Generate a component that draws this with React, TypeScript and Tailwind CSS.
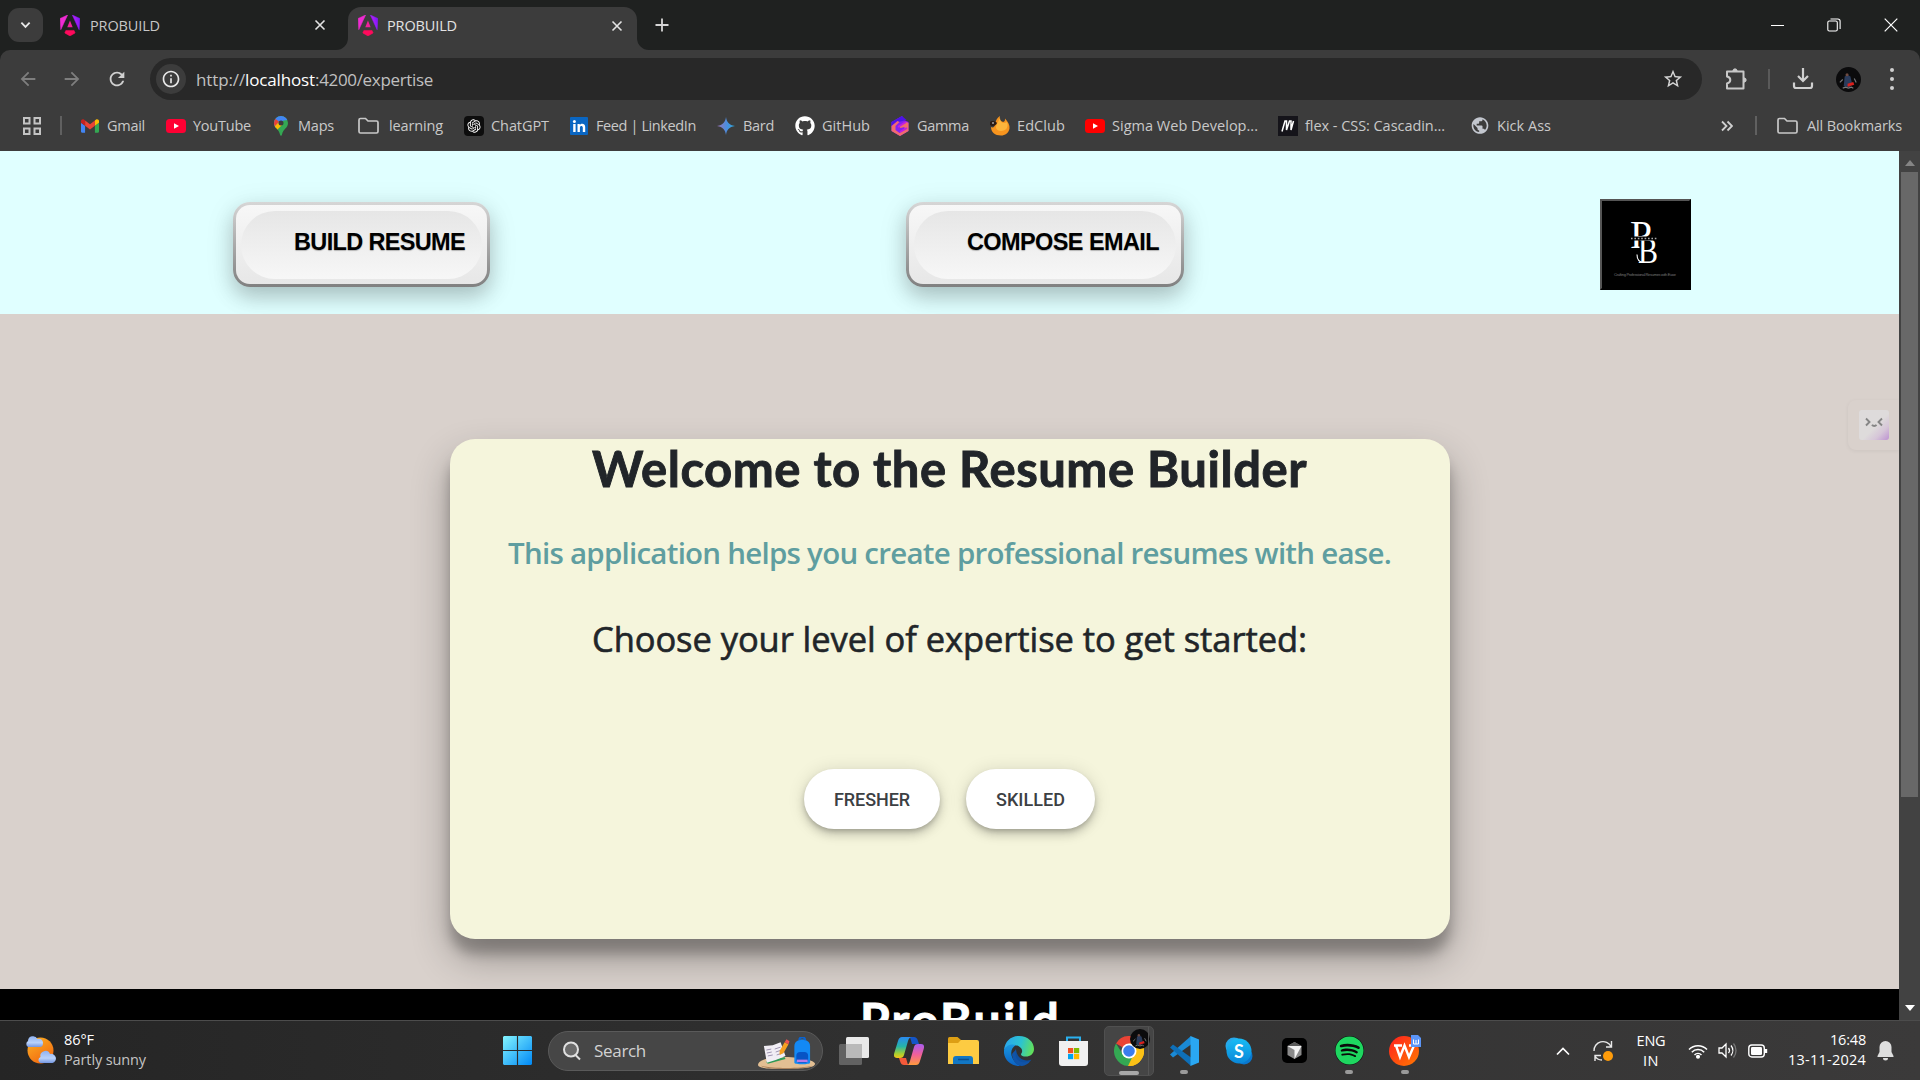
import React, { useLayoutEffect, useRef } from "react";
import { FaGithub, FaSpotify } from "react-icons/fa";
import { RiOpenaiFill } from "react-icons/ri";
import { MdArrowBack, MdArrowForward, MdRefresh, MdStarBorder, MdPublic, MdInfoOutline } from "react-icons/md";

/** Text spread over a given width by letter spacing. */
function Fit({ w, children, className = "" }: { w: number; children: string; className?: string }) {
  const ref = useRef<HTMLSpanElement>(null);
  useLayoutEffect(() => {
    const el = ref.current;
    if (!el) return;
    el.style.letterSpacing = "0px";
    const natural = el.getBoundingClientRect().width;
    el.style.letterSpacing = `${(w - natural) / children.length}px`;
  }, [w, children]);
  return (
    <span ref={ref} className={`inline-block whitespace-pre shrink-0 ${className}`}>
      {children}
    </span>
  );
}

function Angular({ id }: { id: string }) {
  return (
    <svg viewBox="0 0 223 236" className="w-5 h-[21px]">
      <defs>
        <linearGradient id={id + "a"} x1="0" y1=".7" x2="1" y2=".3">
          <stop offset="0" stopColor="#e91fd0" />
          <stop offset=".5" stopColor="#a51ff5" />
          <stop offset="1" stopColor="#7a14ff" />
        </linearGradient>
      </defs>
      <path fill={`url(#${id}a)`} stroke="#8a1cff" strokeWidth="6" d="m222.077 39.192-8.019 125.923L137.387 0l84.69 39.192Z" />
      <path fill="#ff0a5c" stroke="#ff0a5c" strokeWidth="6" d="m168.972 202.017-57.933 33.056-57.934-33.056 11.783-28.556h92.301l11.783 28.556Z" />
      <path fill="#f0209a" d="M111.039 62.675l30.357 73.803H80.681l30.358-73.803Z" />
      <path fill="#f02bd2" stroke="#f02bd2" strokeWidth="6" d="M7.937 165.115 0 39.192 84.69 0 7.937 165.115Z" />
    </svg>
  );
}

function Close() {
  return (
    <svg viewBox="0 0 12 12" className="w-3 h-3">
      <path d="M1.500 1.500l9 9M10.500 1.500l-9 9" stroke="#e3e3e3" strokeWidth="1.600" />
    </svg>
  );
}

function TabStrip() {
  return (
    <div className="h-[50px] bg-[#1f2120] flex items-center">
      <div className="ml-2 w-[35px] h-[34px] rounded-[11px] bg-[#3c3c3c] flex items-center justify-center">
        <svg viewBox="0 0 12 8" className="w-[11px] h-2">
          <path d="M1.500 1.500L6 6l4.500-4.500" fill="none" stroke="#e8e8e8" strokeWidth="2" />
        </svg>
      </div>
      <div className="w-[305px] flex items-center pl-[17px] pr-[22px]">
        <Angular id="t1" />
        <Fit w={70} className="ml-2.5 mt-px text-[14.5px] text-[#c7c7c7]">PROBUILD</Fit>
        <div className="ml-auto"><Close /></div>
      </div>
      <div className="relative w-[289px] h-[43px] mt-[7px] rounded-t-[13px] bg-[#3c3c3c] flex items-center pl-2.5 pr-[14px] pb-1.5">
        <svg viewBox="0 0 12 12" className="absolute -left-3 bottom-0 w-3 h-3"><path d="M12 0v12H0A12 12 0 0 0 12 0z" fill="#3c3c3c" /></svg>
        <svg viewBox="0 0 12 12" className="absolute -right-3 bottom-0 w-3 h-3"><path d="M0 0v12h12A12 12 0 0 1 0 0z" fill="#3c3c3c" /></svg>
        <Angular id="t2" />
        <Fit w={70} className="ml-[9px] text-[14.5px] text-[#e3e3e3]">PROBUILD</Fit>
        <div className="ml-auto"><Close /></div>
      </div>
      <svg viewBox="0 0 14 14" className="ml-[18px] w-[14px] h-[14px]"><path d="M7 .5v13M.5 7h13" stroke="#d5d5d5" strokeWidth="1.8" /></svg>
      <div className="ml-auto flex items-center gap-[43px] pr-[22px]">
        <div className="w-[13px] h-px bg-white" />
        <svg viewBox="0 0 14 14" className="w-[14px] h-[14px]" fill="none" stroke="#fff" strokeWidth="1.1">
          <rect x=".8" y="3" width="9.500" height="10" rx="1.500" />
          <path d="M3.500 1h7.300a2.300 2.300 0 0 1 2.300 2.300V11" />
        </svg>
        <svg viewBox="0 0 14 14" className="w-[14px] h-[14px]"><path d="M.7.7l12.600 12.600M13.300.7L.7 13.300" stroke="#fff" strokeWidth="1.200" /></svg>
      </div>
    </div>
  );
}

function AddressBar() {
  return (
    <div className="h-[58px] pt-2 flex">
      <div className="flex items-center h-[42px] pl-[17px] text-[22px]">
        <MdArrowBack className="text-[#7e7e7e]" />
        <MdArrowForward className="ml-[22px] text-[#7e7e7e]" />
        <MdRefresh className="ml-[23px] text-[#d0d0d0]" />
      </div>
      <div className="ml-[22px] w-[1552px] h-[42px] rounded-full bg-[#282828] flex items-center pl-1.5 pr-[18px]">
        <div className="w-[30px] h-[30px] rounded-full bg-[#3c3c3c] flex items-center justify-center">
          <MdInfoOutline className="text-[20px] text-[#e8e8e8]" />
        </div>
        <div className="ml-[10px] mt-0.5 flex text-[17px] text-[#c0c0c0]">
          <Fit w={49}>http://</Fit>
          <Fit w={70} className="text-white">localhost</Fit>
          <Fit w={118}>:4200/expertise</Fit>
        </div>
        <MdStarBorder className="ml-auto text-[22px] text-[#d5d5d5]" />
      </div>
      <div className="flex items-center h-[42px] ml-[23px]">
        <svg viewBox="0 0 22 24" className="w-[22px] h-6" fill="none" stroke="#c8c8c8" strokeWidth="2" strokeLinejoin="round">
          <path d="M2 4.500h16.500v17H2v-5c2.400-.6 3.300-2 3.300-3.500S4.400 10 2 9.500z" />
          <path d="M7.800 3.500a2.300 2.300 0 0 1 4.400 0zM19.500 10.800a2.300 2.300 0 0 1 0 4.400z" fill="#c8c8c8" strokeWidth="1" />
        </svg>
        <div className="ml-[21px] w-0.5 h-5 bg-[#5a5a5a]" />
        <svg viewBox="0 0 22 22" className="ml-[22px] w-[22px] h-[22px]" fill="none" stroke="#cfcfcf" strokeWidth="2.200">
          <path d="M11 0v12M6 8l5 5 5-5M2 14.500V18a2 2 0 0 0 2 2h14a2 2 0 0 0 2-2v-3.500" />
        </svg>
        <Avatar className="ml-[22px] w-[25px] h-[25px]" />
        <div className="ml-[29px] flex flex-col gap-[5px]">
          <i className="w-1 h-1 rounded-full bg-[#d0d0d0]" />
          <i className="w-1 h-1 rounded-full bg-[#d0d0d0]" />
          <i className="w-1 h-1 rounded-full bg-[#d0d0d0]" />
        </div>
      </div>
    </div>
  );
}

function Avatar({ className = "" }: { className?: string }) {
  return (
    <svg viewBox="0 0 26 26" className={className}>
      <circle cx="13" cy="13" r="13" fill="#0b0b0c" />
      <path d="M8 20l1-10 3-2 3 2 1.500 6-2 5z" fill="#2b3c5c" />
      <circle cx="11.500" cy="8" r="1.600" fill="#6d4a40" />
      <path d="M12 17.500l6-2 1 3-7 2z" fill="#d9201c" />
      <path d="M4 16l3-3M19 12l2 4M7 22l3-1 3 1 3-1 2 1" stroke="#77777a" strokeWidth="1.200" fill="none" />
    </svg>
  );
}

const YouTube = ({ c }: { c: string }) => (
  <svg viewBox="0 0 20 14" className="w-5 h-[14px]"><rect width="20" height="14" rx="3.500" fill={c} /><path d="M8 4.200v5.600L13 7z" fill="#fff" /></svg>
);
const Folder = () => (
  <svg viewBox="0 0 21 17" className="w-[21px] h-[17px] shrink-0"><path d="M1 3a1.500 1.500 0 0 1 1.500-1.500h5L10 4h8.500A1.500 1.500 0 0 1 20 5.500v9a1.500 1.500 0 0 1-1.500 1.500h-16A1.500 1.500 0 0 1 1 14.500z" fill="none" stroke="#c8c8c8" strokeWidth="1.700" /></svg>
);
const Gmail = () => (
  <svg viewBox="52 42 88 66" className="w-[18px] h-[14px]">
    <path fill="#4285f4" d="M58 108h14V74L52 59v43c0 3.320 2.690 6 6 6" />
    <path fill="#34a853" d="M120 108h14c3.320 0 6-2.690 6-6V59l-20 15" />
    <path fill="#fbbc04" d="M120 48v26l20-15v-8c0-7.420-8.470-11.650-14.400-7.200" />
    <path fill="#ea4335" d="M72 74V48l24 18 24-18v26L96 92" />
    <path fill="#c5221f" d="M52 51v8l20 15V48l-5.600-4.200c-5.940-4.450-14.400-.22-14.400 7.200" />
  </svg>
);
const Maps = () => (
  <svg viewBox="0 0 14 20" className="w-[14px] h-5">
    <clipPath id="pin"><path d="M7 0a7 7 0 0 0-7 7c0 5 5 6 6 11.500.3 1.600 1.700 1.600 2 0C9 13 14 12 14 7a7 7 0 0 0-7-7z" /></clipPath>
    <g clipPath="url(#pin)">
      <rect width="14" height="20" fill="#34a853" />
      <path d="M0 0h14v4L9.500 4.500 2 12H0z" fill="#4285f4" />
      <path d="M0 2l5 3.500L1 11H0z" fill="#ea4335" />
      <path d="M9 8l-7 7-2-4 5-5z" fill="#fbbc04" />
    </g>
    <circle cx="7" cy="7" r="2.500" fill="#3c3c3c" />
  </svg>
);
const OpenAI = () => (
  <div className="w-5 h-5 rounded-[4px] bg-[#0d0d0d] flex items-center justify-center"><RiOpenaiFill className="text-white text-[16px]" /></div>
);
const LinkedIn = () => (
  <svg viewBox="0 0 18 18" className="w-[18px] h-[18px]"><rect width="18" height="18" rx="1" fill="#0a66c2" /><circle cx="4.400" cy="4.600" r="1.500" fill="#fff" /><path d="M3.200 7h2.400v8H3.200zM7.500 7h2.300v1.100c1.400-2.200 5.400-1.700 5.400 1.800V15h-2.400v-4.400c0-2.300-2.900-2.200-2.900 0V15H7.500z" fill="#fff" /></svg>
);
const Bard = () => (
  <svg viewBox="0 0 18 18" className="w-[18px] h-[18px]"><defs><linearGradient id="bd"><stop stopColor="#9a73b5" /><stop offset=".55" stopColor="#4a8fe0" /><stop offset="1" stopColor="#2ba8d8" /></linearGradient></defs><path d="M9 0c.7 5 3 8.200 9 9-6 .8-8.300 4-9 9-.7-5-3-8.200-9-9 6-.8 8.300-4 9-9z" fill="url(#bd)" /></svg>
);
const Gamma = () => (
  <svg viewBox="0 0 20 20" className="w-5 h-5">
    <path d="M12 0L1.500 6v9L10 20l8.500-5V6L14 4z" fill="#8420f0" />
    <path d="M12 0L1.500 6v5l7-5 8-2z" fill="#4d12e8" />
    <path d="M1.500 10l6-5 2 1-4 4v4l4 3 5-3v-3l-4 1-2-2 8-4 2 1v8L10 20l-8.500-5z" fill="#f26a6e" />
    <path d="M8 11l8-5M10 16l7-4" stroke="#c31fe0" strokeWidth="2" />
  </svg>
);
const EdClub = () => (
  <svg viewBox="0 0 20 20" className="w-5 h-5">
    <path d="M10 0c-1 4 1 5 3 6 2-.5 2-2 2-3.500 3 3 5 7 4.500 10C18.800 17 15 19.500 11 19.500 5 19.500 1 16 1 11c2 1 4 0 4-3 1-4 2-6 5-8z" fill="#f7941e" />
    <path d="M10 2c0 5 4 6 7 4 2 5-1 9-6 9S5 11 7 8z" fill="#fdb53c" />
    <path d="M0 6c2-2 6-1 7 1-1 3-5 4-7 2z" fill="#2b1c16" /><circle cx="3" cy="7" r=".8" fill="#fff" />
  </svg>
);
const Mdn = () => (
  <svg viewBox="0 0 20 20" className="w-5 h-5"><rect width="20" height="20" fill="#15141a" /><path d="M4 15.500L7 5h1.500v9L11.500 5H13v9L15.500 5" stroke="#fff" strokeWidth="1.500" fill="none" /></svg>
);

const bookmarks: { icon: React.ReactNode; box: string; label: string; w: number }[] = [
  { icon: <Gmail />, box: "w-[86px]", label: "Gmail", w: 38 },
  { icon: <YouTube c="#ff0033" />, box: "w-[105px]", label: "YouTube", w: 58 },
  { icon: <Maps />, box: "w-[87px]", label: "Maps", w: 36 },
  { icon: <Folder />, box: "w-[106px]", label: "learning", w: 54 },
  { icon: <OpenAI />, box: "w-[105px]", label: "ChatGPT", w: 58 },
  { icon: <LinkedIn />, box: "w-[147px]", label: "Feed | LinkedIn", w: 100 },
  { icon: <Bard />, box: "w-[79px]", label: "Bard", w: 31 },
  { icon: <FaGithub className="text-white text-[20px]" />, box: "w-[95px]", label: "GitHub", w: 48 },
  { icon: <Gamma />, box: "w-[100px]", label: "Gamma", w: 52 },
  { icon: <EdClub />, box: "w-[95px]", label: "EdClub", w: 48 },
  { icon: <YouTube c="#ff0000" />, box: "w-[193px]", label: "Sigma Web Develop...", w: 146 },
  { icon: <Mdn />, box: "w-[192px]", label: "flex - CSS: Cascadin...", w: 140 },
  { icon: <MdPublic className="text-[#c3c7cf] text-[21px]" />, box: "w-[90px]", label: "Kick Ass", w: 54 },
];

function Bookmarks() {
  return (
    <div className="h-[43px] pb-[8px] flex items-center text-[14.5px] text-[#c9c9c9]">
      <svg viewBox="0 0 18 18" className="ml-[23px] w-[18px] h-[18px]" fill="none" stroke="#c4c4c4" strokeWidth="2">
        <path d="M1 1h5.500v5.500H1zM11.500 1H17v5.500h-5.500zM1 11.500h5.500V17H1zM11.500 11.500H17V17h-5.500z" />
      </svg>
      <div className="ml-[19px] w-0.5 h-[19px] bg-[#606060]" />
      <div className="ml-[18px] flex items-center">
        {bookmarks.map((b) => (
          <div key={b.label} className={`flex items-center shrink-0 ${b.box}`}>
            <div className={`w-5 shrink-0 flex justify-center ${b.label === "learning" ? "mr-[11px]" : "mr-[7px]"}`}>{b.icon}</div>
            <Fit w={b.w} className="mt-px">{b.label}</Fit>
          </div>
        ))}
      </div>
      <svg viewBox="0 0 12 12" className="ml-auto w-3 h-3" fill="none" stroke="#d0d0d0" strokeWidth="1.800"><path d="M1 1.500L5.500 6 1 10.500M6.500 1.500L11 6l-4.500 4.500" /></svg>
      <div className="ml-[22px] mr-5 w-0.5 h-[19px] bg-[#606060]" />
      <Folder />
      <Fit w={95} className="mt-px ml-[9px] mr-[18px]">All Bookmarks</Fit>
    </div>
  );
}

function GlossButton({ box, w, children }: { box: string; w: number; children: string }) {
  return (
    <div className={`h-[85px] rounded-[17px] p-[3px] bg-linear-to-b from-[#d6d6d6] to-[#808080] shadow-[0_10px_20px_rgba(0,0,0,0.18),0_6px_30px_rgba(0,0,0,0.1)] ${box}`}>
      <div className="h-full rounded-[14px] px-[5px] pt-[6px] pb-[5px] bg-linear-to-b from-[#f7f7f7] to-[#e7e7e7]">
        <div className="h-full rounded-[34px] bg-linear-to-b from-[#e6e6e6] to-[#f7f7f7] pl-[53px] pt-[13px] text-[23.5px] leading-9 font-bold text-black font-['Liberation_Sans',sans-serif] [text-shadow:0_1px_1px_rgba(0,0,0,0.25)]">
          <Fit w={w}>{children}</Fit>
        </div>
      </div>
    </div>
  );
}

function Monogram() {
  return (
    <div className="mt-[-3px] w-[91px] h-[91px] bg-black border-2 border-t-[#555] border-l-[#555] border-r-black border-b-black">
      <svg viewBox="0 0 87 87" className="w-full h-full">
        <g fill="#fff" fontFamily="Liberation Serif">
          <text x="28" y="47" fontSize="39" textLength="22" lengthAdjust="spacingAndGlyphs">P</text>
          <path d="M37.500 37h22v27h-22z" fill="#000" />
          <text x="36" y="62" fontSize="36" textLength="20" lengthAdjust="spacingAndGlyphs">B</text>
        </g>
        <rect x="28" y="35.500" width="32" height="4" fill="#000" />
        <path d="M29 37.500h27" stroke="#aaa" strokeWidth="1.600" strokeDasharray="1.600 1.800" />
        <path d="M42 61.500c-4.500 0-7-3-7-8" stroke="#fff" strokeWidth="1.100" fill="none" />
        <text x="12" y="75" fontSize="4" fill="#777" fontFamily="Liberation Sans" textLength="62">Crafting Professional Resumes with Ease</text>
      </svg>
    </div>
  );
}

function Pill({ box, w, children }: { box: string; w: number; children: string }) {
  return (
    <div className={`h-[60px] rounded-full bg-white flex items-center justify-center pt-0.5 text-lg font-medium text-[#3c4043] font-['Roboto',sans-serif] shadow-[0_3px_5px_-1px_rgba(0,0,0,0.2),0_6px_10px_rgba(0,0,0,0.14),0_1px_18px_rgba(0,0,0,0.12)] ${box}`}>
      <Fit w={w}>{children}</Fit>
    </div>
  );
}

function Page() {
  return (
    <div className="h-[869px] flex">
      <div className="relative w-[1899px] h-full overflow-hidden bg-[#d9d1cc]">
        <header className="h-[163px] bg-[#e0ffff] flex pt-[51px] pl-[233px] gap-[416px]">
          <GlossButton box="w-[257px]" w={171}>BUILD RESUME</GlossButton>
          <GlossButton box="w-[278px]" w={192}>COMPOSE EMAIL</GlossButton>
          <Monogram />
        </header>
        <div className="relative h-[675px] pt-[125px] bg-[#d9d1cc]">
          <main className="mx-auto w-[1000px] h-[500px] rounded-[25px] bg-[#f5f5dc] flex flex-col items-center text-[#212529] shadow-[0_19px_38px_rgba(0,0,0,0.3),0_15px_12px_rgba(0,0,0,0.22)]">
            <h1 className="h-[58px] leading-[58px] text-[49px] font-bold font-['Lato',sans-serif] [-webkit-text-stroke:0.9px_#212529]"><Fit w={715}>Welcome to the Resume Builder</Fit></h1>
            <h2 className="mt-[36px] h-10 leading-10 text-[29.5px] font-semibold text-[#5f9ea0]"><Fit w={883}>This application helps you create professional resumes with ease.</Fit></h2>
            <h3 className="mt-[44px] h-11 leading-[44px] text-[34.5px] font-medium [-webkit-text-stroke:0.6px_#212529]"><Fit w={715}>Choose your level of expertise to get started:</Fit></h3>
            <div className="mt-[108px] flex gap-[26px]">
              <Pill box="w-[136px]" w={76}>FRESHER</Pill>
              <Pill box="w-[129px]" w={69}>SKILLED</Pill>
            </div>
          </main>
        </div>
        <footer className="relative h-[31px] bg-black overflow-hidden flex justify-center text-white font-bold text-[48px] leading-[58px] font-['Lato',sans-serif] [-webkit-text-stroke:0.9px_#fff]">
          <Fit w={201} className="mt-0.5 ml-[22px]">ProBuild</Fit>
        </footer>
        <div className="absolute right-0 top-[249px] w-[51px] h-[50px] rounded-l-[8px] bg-[#d9d1cc] shadow-[0_1px_4px_rgba(0,0,0,0.06)] pl-[11px] pt-2.5">
          <svg viewBox="0 0 30 30" className="w-[30px] h-[30px]">
            <defs><linearGradient id="fc" x1=".3" y1=".3" x2="1" y2="1"><stop offset=".35" stopColor="#dedbdb" /><stop offset=".65" stopColor="#d6c6d8" /><stop offset="1" stopColor="#bd92d2" /></linearGradient></defs>
            <rect width="30" height="30" rx="3" fill="url(#fc)" />
            <path d="M7 8.500l3.500 3.500L7 15.500M23 8.500L19.500 12l3.500 3.500M13 14.800c1 1.500 3.500 1.500 4.500 0" fill="none" stroke="#858585" strokeWidth="1.900" />
          </svg>
        </div>
      </div>
      <div className="w-[21px] bg-[#424242] flex flex-col items-center">
        <svg viewBox="0 0 10 6" className="mt-[9px] mb-[6px] w-[10px] h-[6px]"><path d="M5 0l5 6H0z" fill="#858585" /></svg>
        <div className="w-[17px] h-[625px] bg-[#686868]" />
        <svg viewBox="0 0 10 6" className="mt-auto mb-[9px] w-[10px] h-[6px]"><path d="M0 0h10L5 6z" fill="#fff" /></svg>
      </div>
    </div>
  );
}

function Weather() {
  return (
    <div className="ml-[25px] w-[300px] flex items-center pb-0.5">
      <svg viewBox="0 0 31 30" className="w-[31px] h-[30px]">
        <defs>
          <linearGradient id="sun" x1="0" y1="0" x2=".6" y2="1"><stop stopColor="#fcb424" /><stop offset="1" stopColor="#f26a10" /></linearGradient>
          <linearGradient id="cl" x1="0" y1="0" x2="0" y2="1"><stop stopColor="#8fb2f2" /><stop offset=".6" stopColor="#b9d2fb" /><stop offset="1" stopColor="#7596e0" /></linearGradient>
        </defs>
        <circle cx="15.500" cy="15.500" r="13" fill="url(#sun)" />
        <path d="M3 12a3.500 3.500 0 0 1 0-6 5 5 0 0 1 9.500-2A4 4 0 0 1 18 8q0 4-3 4z" fill="url(#cl)" />
        <path d="M15.500 28a3.200 3.200 0 0 1 0-6 5 5 0 0 1 9.500-3A4.500 4.500 0 0 1 27.500 28z" fill="url(#cl)" />
      </svg>
      <div className="ml-2 flex flex-col items-start text-[14.500px] leading-5 text-[#c4c4c4]">
        <Fit w={30} className="text-white">86°F</Fit>
        <Fit w={82}>Partly sunny</Fit>
      </div>
    </div>
  );
}

function Slot({ x, children, dot }: { x: string; children: React.ReactNode; dot?: boolean }) {
  return (
    <div className={`relative h-full flex items-center justify-center shrink-0 ${x}`}>
      {children}
      {dot && <i className="absolute bottom-[6px] left-1/2 -ml-1 w-2 h-1 rounded-full bg-[#9a9a9a]" />}
    </div>
  );
}

function Taskbar() {
  return (
    <div className="h-[60px] border-t border-[#4c4c4c] bg-linear-to-r from-[#252525] via-[#303030] via-45% to-[#3b3a3a] flex items-center">
      <Weather />
      <svg viewBox="0 0 30 30" className="ml-[178px] w-[29px] h-[29px]">
        <defs><linearGradient id="win" x1="0" y1="0" x2="1" y2="1"><stop stopColor="#84f5ff" /><stop offset="1" stopColor="#0088f5" /></linearGradient></defs>
        <path d="M1 0h13.400v14.400H0V1zM15.600 0H29l1 1v13.400H15.600zM0 15.600h14.400V30H1l-1-1zM15.600 15.600H30V29l-1 1H15.600z" fill="url(#win)" />
      </svg>
      <div className="ml-[16px] w-[275px] h-[40px] rounded-full bg-[#464646] border border-[#5a5a5a] flex items-center pl-[13px] pr-[7px]">
        <svg viewBox="0 0 20 20" className="w-5 h-5" fill="none" stroke="#e0e0e0" strokeWidth="2"><circle cx="9" cy="8.500" r="7" fill="#6a6a6a" /><path d="M13.500 14l4.500 4.500" /></svg>
        <Fit w={52} className="ml-[12px] text-[17px] text-[#d2d2d2]">Search</Fit>
        <svg viewBox="0 0 58 32" className="ml-auto mt-1 w-[57px] h-8">
          <path d="M0 28c0-4 8-8 27-8s31 4 31 7c0 4-12 5-29 5S0 32 0 28z" fill="#e3bf93" />
          <path d="M3 29c10 3 42 3 52 0-4 4-48 4-52 0z" fill="#a77a52" />
          <path d="M8 25l19-5 1 2-18 5z" fill="#2f9a55" /><path d="M6 9l9-1 3 15-9 3zM15 8l8-3 5 14-10 4z" fill="#f1eef5" />
          <path d="M8.500 13l5-1M9 16l5-1M17 12l6-2M18 15l6-2M10 19l5-1M19 18l6-2" stroke="#9c93b0" />
          <path d="M22 14l5-9 4 2-5 9-4 2z" fill="#f6a021" /><path d="M27 5l2-3 3 2-1 3z" fill="#ef5350" />
          <path d="M37 26V9c0-9 16-9 16 0v17c0 2-16 2-16 0z" fill="#1389f4" /><path d="M42 3c0-4 6-4 6 0" stroke="#0b64d0" strokeWidth="2" fill="none" /><rect x="39" y="15" width="12" height="11" rx="4" fill="#0754c5" /><path d="M39.500 24h11" stroke="#b67bea" strokeWidth="2.500" />
        </svg>
      </div>
      <Slot x="w-[62px]">
        <svg viewBox="0 0 30 28" className="w-[30px] h-7"><rect y="7" width="23" height="21" rx="1.500" fill="#626262" /><rect x="7" width="23" height="21" rx="1.500" fill="#e9e9e9" /><rect x="7" y="7" width="16" height="14" fill="#b9b9b9" /></svg>
      </Slot>
      <Slot x="w-[47px]">
        <svg viewBox="0 0 30 28" className="w-[30px] h-7">
          <defs>
            <linearGradient id="c1" x1="0" y1="0" x2="0" y2="1"><stop stopColor="#2a8af2" /><stop offset=".45" stopColor="#26b5a8" /><stop offset=".8" stopColor="#a8d030" /><stop offset="1" stopColor="#f5c518" /></linearGradient>
            <linearGradient id="c2" x1="0" y1="0" x2="0" y2="1"><stop stopColor="#a95cf0" /><stop offset=".5" stopColor="#f0609a" /><stop offset="1" stopColor="#ff9a3c" /></linearGradient>
          </defs>
          <path d="M16 0h4c2 0 3 1 4 4l1 3h-7z" fill="#1455c8" />
          <path d="M14 28h-4c-2 0-3-1-4-4l-1-3h7z" fill="#f4593a" />
          <path d="M8 0h10c-2 0-3 1-4 4l-4 14c-.6 2-1.500 3-4 3H3c-3 0-3.500-2-2.700-5L4 4c1-3 2-4 4-4z" fill="url(#c1)" />
          <path d="M22 28H12c2 0 3-1 4-4l4-14c.6-2 1.500-3 4-3h3c3 0 3.500 2 2.700 5L26 24c-1 3-2 4-4 4z" fill="url(#c2)" />
        </svg>
      </Slot>
      <Slot x="w-[63px]">
        <svg viewBox="0 0 31 27" className="w-[31px] h-[27px]"><path d="M0 1.500Q0 0 1.500 0h8L13 3v8H0z" fill="#dd9f14" /><path d="M0 6h10l3-3h16q2 0 2 2v22H0z" fill="#fdcb42" /><path d="M5 27v-5q0-3 3-3h14q3 0 3 3v5z" fill="#1277c4" /><path d="M10 22.500h11" stroke="#0a4f8f" strokeWidth="1.500" /></svg>
      </Slot>
      <Slot x="w-[47px]">
        <svg viewBox="0 0 30 30" className="w-[30px] h-[30px]">
          <defs>
            <linearGradient id="e1" x1="0" y1=".3" x2="1" y2=".5"><stop stopColor="#2aa5ee" /><stop offset=".55" stopColor="#2cc3d0" /><stop offset="1" stopColor="#62e05a" /></linearGradient>
            <linearGradient id="e2" x1="0" y1="0" x2="0" y2="1"><stop stopColor="#1a98e0" /><stop offset="1" stopColor="#0b62c4" /></linearGradient>
          </defs>
          <path d="M0 14C1 5 7 0 15 0c9 0 15 6 15 13 0 5-4 7.500-8 7.500-4 0-6-1.500-4.500-3.200C20 13 15 9 9 9c-4 0-7 2-9 5z" fill="url(#e1)" />
          <path d="M0 14C2 9 8 7.500 12 9c-4 2-6 7-4 12 1.600 4 5 8 9 8.800C8 31-1 24 0 14z" fill="url(#e2)" />
          <path d="M12 13c-4 4-1 15 8 15.500 3-.3 6-2.500 7.500-5C22 26 13 24 12 13z" fill="#0d4fa0" />
          <path d="M8 19c1 7 5 11 10 10.900 3-.4 6-1.900 8-4.400-8 2-16 0-14-11-2 1-4 2.500-4 4.500z" fill="#1054a8" />
        </svg>
      </Slot>
      <Slot x="w-[63px]">
        <svg viewBox="0 0 29 30" className="w-[29px] h-[30px]"><path d="M8 5V1.500h13V5" stroke="#2ab0ee" strokeWidth="2" fill="none" /><path d="M0 5h29v22q0 3-3 3H3q-3 0-3-3z" fill="#f0f0f0" /><path d="M9 12h5.200v5.200H9z" fill="#f25022" /><path d="M15 12h5.200v5.200H15z" fill="#7fba00" /><path d="M9 18h5.200v5.200H9z" fill="#00a4ef" /><path d="M15 18h5.200v5.200H15z" fill="#ffb900" /></svg>
      </Slot>
      <div className="relative -ml-px w-[50px] h-[50px] rounded-[5px] bg-[#454545] border border-[#505050] flex items-center pl-[9px]">
        <svg viewBox="0 0 30 30" className="w-[30px] h-[30px]">
          <path d="M15 15L2 7.500A15 15 0 0 1 28 7.500z" fill="#ea4335" />
          <path d="M15 15L28 7.500A15 15 0 0 1 15 30z" fill="#fbc116" />
          <path d="M28 7.500H15v6l-1 16.450A15 15 0 0 0 28 7.500z" fill="#fbc116" />
          <path d="M2 7.500l7 11 10 1.200L14 30A15 15 0 0 1 2 7.500z" fill="#34a853" />
          <circle cx="15" cy="15" r="7.500" fill="#fff" /><circle cx="15" cy="15" r="5.800" fill="#3b7ded" />
        </svg>
        <Avatar className="absolute right-[3px] top-[2px] w-5 h-5" />
        <i className="absolute right-0 top-0 w-[5px] h-full border-l border-[#555] rounded-r" />
        <i className="absolute bottom-0 left-[14px] w-5 h-1 rounded-full bg-[#a8a8a8]" />
      </div>
      <Slot x="ml-[7px] w-[46px]" dot>
        <svg viewBox="0 0 30 30" className="w-[30px] h-[30px]"><path d="M1 18.500L22 0v8.500L4 21.500z" fill="#1a8ad6" /><path d="M1 11.500L22 30v-8.500L4 8.500z" fill="#0e6fb8" /><path d="M21.500 0L30 3.500v23L21.500 30z" fill="#2aa7f2" /></svg>
      </Slot>
      <Slot x="w-[64px]">
        <svg viewBox="0 0 28 28" className="w-7 h-7"><defs><linearGradient id="sk" x1="0" y1="0" x2="0" y2="1"><stop stopColor="#17bcf5" /><stop offset="1" stopColor="#0a86d8" /></linearGradient></defs><circle cx="9" cy="9" r="8.500" fill="#28a8ea" /><circle cx="19" cy="19" r="8.500" fill="#0a78cf" /><circle cx="14" cy="14" r="12.500" fill="url(#sk)" /><text x="14" y="20.500" textAnchor="middle" fontSize="18" fontWeight="700" fontFamily="Lato" fill="#fff">S</text></svg>
      </Slot>
      <Slot x="w-[46px]">
        <svg viewBox="0 0 25 25" className="w-[25px] h-[25px]"><rect width="25" height="25" rx="5" fill="#000" /><path d="M12.500 4l7 4v9l-7 4-7-4V8z" fill="#8a8a8a" /><path d="M5.500 8h14l-7 13v-9z" fill="#f4f4f4" /><path d="M5.500 8l7-4 7 4z" fill="#5c5c5c" /></svg>
      </Slot>
      <Slot x="w-[64px]" dot>
        <div className="w-[29px] h-[29px] rounded-full bg-[#0b0b0b]"><FaSpotify className="text-[29px] text-[#1ed760]" /></div>
      </Slot>
      <Slot x="w-[47px]" dot>
        <svg viewBox="0 0 32 31" className="w-8 h-[31px]"><defs><linearGradient id="wp" x1="0" y1="0" x2="1" y2="1"><stop stopColor="#ff1f1f" /><stop offset="1" stopColor="#ff7a00" /></linearGradient></defs><circle cx="15" cy="16" r="15" fill="url(#wp)" /><path d="M5 10.500h8M7 10.500l4 11.500 4.500-11.500L20 22l5-11.500h-5" fill="none" stroke="#fff" strokeWidth="2.400" /><path d="M22 0h7l3 3v9H22z" fill="#5b95f7" /><path d="M24.500 4.500v4.500h5V4.500M27 5v4" stroke="#fff" fill="none" /></svg>
      </Slot>
      <div className="ml-auto flex items-center">
        <svg viewBox="0 0 14 10" className="w-[14px] h-[10px]"><path d="M1 8.500l6-6 6 6" stroke="#fff" strokeWidth="1.700" fill="none" /></svg>
        <svg viewBox="0 0 21 22" className="ml-[23px] w-[21px] h-[22px]" fill="none" stroke="#e8e8e8" strokeWidth="1.400"><path d="M1 11a9 9 0 0 1 17-4.500M18.500 1v6H13M2 21v-5.500h6M2 16c1.500 3 4 4 7 4" /><circle cx="15" cy="16" r="5" fill="#ff9c0a" stroke="none" /></svg>
        <div className="ml-[23px] w-7 flex flex-col items-center text-[14.500px] leading-5 text-white"><Fit w={29}>ENG</Fit><Fit w={16}>IN</Fit></div>
        <svg viewBox="0 0 20 16" className="ml-[23px] w-5 h-4" fill="none" stroke="#fff" strokeWidth="1.500"><path d="M1 6.500a12.500 12.500 0 0 1 18 0M3.800 9.300a8.500 8.500 0 0 1 12.400 0M6.500 12a5 5 0 0 1 7 0" /><circle cx="10" cy="13.800" r="1.300" fill="#fff" /></svg>
        <svg viewBox="0 0 20 17" className="ml-[10px] w-5 h-[17px]" fill="none" stroke="#fff" strokeWidth="1.300"><path d="M1 6v5h3l4 4V2L4 6zM10.500 6a4 4 0 0 1 0 5M13 3.500a8 8 0 0 1 0 10" /><path d="M15.500 1.500a11 11 0 0 1 0 14" stroke="#777" /></svg>
        <svg viewBox="0 0 20 14" className="ml-[10px] w-5 h-[14px]"><rect x=".8" y="1" width="15.500" height="12" rx="3" fill="none" stroke="#fff" strokeWidth="1.400" /><rect x="3" y="3" width="11" height="8" rx="1.300" fill="#fff" /><path d="M18 5v4" stroke="#fff" strokeWidth="2.400" /></svg>
        <div className="ml-[20px] flex flex-col items-end pb-0.5 text-[14.500px] leading-5 text-white"><Fit w={36}>16:48</Fit><Fit w={78}>13-11-2024</Fit></div>
        <svg viewBox="0 0 17 20" className="ml-[11px] mr-[26px] w-[17px] h-5"><path d="M8.500 0a6 6 0 0 1 6 6v5l2 4q.5 1-.5 1H1q-1 0-.5-1l2-4V6a6 6 0 0 1 6-6zM6 17h5a2.500 2.500 0 0 1-5 0z" fill="#dedede" /></svg>
      </div>
    </div>
  );
}

export default function App() {
  return (
    <div className="w-[1920px] h-[1080px] overflow-hidden bg-[#1f2120] font-['Open_Sans','Noto_Sans',sans-serif]">
      <TabStrip />
      <div className="rounded-t-[10px] bg-[#3c3c3c]">
        <AddressBar />
        <Bookmarks />
      </div>
      <Page />
      <Taskbar />
    </div>
  );
}
